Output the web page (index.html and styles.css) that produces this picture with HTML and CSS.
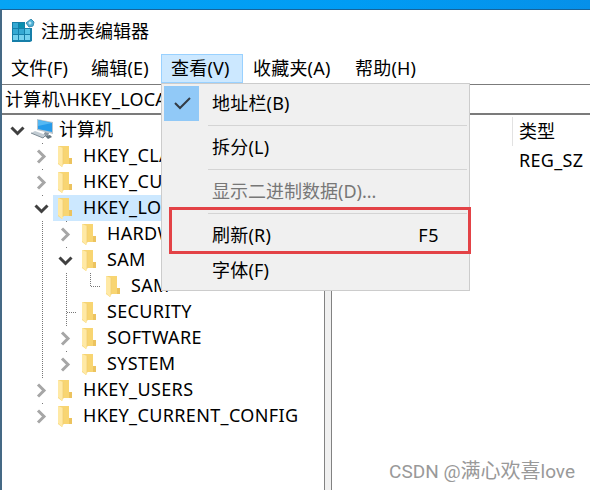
FILE: index.html
```
<!DOCTYPE html>
<html lang="zh-CN">
<head>
    <meta charset="UTF-8">
    <title>注册表编辑器</title>
    <link rel="stylesheet" href="styles.css">
</head>
<body>
    <!-- Shared icons -->
    <svg class="defs">
        <symbol id="folder" viewBox="0 0 15 22">
            <path d="M0 1h10v12h4v6H5l-1 3-4-3z" fill="#f5d475"/>
            <path d="M5 1h6v12h3v6H5z" fill="#f8d572"/>
            <path d="M11 13h3v6h-3z" fill="#ecc35f"/>
            <path d="M0 1l5 2v18l-1 1-4-4z" fill="#ffe9a5"/>
            <path d="M5 3v17" stroke="#efcd70" stroke-width=".7"/>
        </symbol>
        <symbol id="closed" viewBox="0 0 24 24">
            <path d="M9 6.500l6 6-6 6" fill="none" stroke="#a6a6a6" stroke-width="3"/>
        </symbol>
        <symbol id="open" viewBox="0 0 24 24">
            <path d="M6.500 9.500l6 6 6-6" fill="none" stroke="#404040" stroke-width="3"/>
        </symbol>
    </svg>

    <div class="desktop"></div>
    <div class="window">
        <div class="title-bar">
            <svg class="app-icon" width="24" height="24" viewBox="0 0 24 24">
                <path d="M1 3h13v6h7v13l-2 1H1z" fill="#167fa9"/>
                <path d="M2 4h5v5H2zM2 10h5v5H2zM8 10h5v5H8z" fill="#35a9d3"/>
                <path d="M8 4h5v5H8z" fill="#078fae"/>
                <path d="M14 10h5v5h-5z" fill="#55c3e5"/>
                <path d="M2 16h5v5H2zM8 16h5v5H8zM14 16h5v5h-5z" fill="#75d1ee"/>
                <path d="M20 0l3 3-1 4-4 1-3-4z" fill="#4eb0d5" stroke="#398eb2"/>
                <circle cx="19" cy="4" r="1.500" fill="#b6e5f4"/>
            </svg>
            <span>注册表编辑器</span>
        </div>
        <div class="menu-bar">
            <div class="menu file">文件(F)</div>
            <div class="menu edit">编辑(E)</div>
            <div class="menu view active">查看(V)
                <div class="dropdown">
                    <div class="item">
                        <span class="check"><svg width="35" height="35" viewBox="0 0 35 35"><path d="M11 17l5 5 10-10" fill="none" stroke="#333b45" stroke-width="2"/></svg></span>
                        <span>地址栏(B)</span>
                    </div>
                    <div class="separator"></div>
                    <div class="item"><span>拆分(L)</span></div>
                    <div class="separator"></div>
                    <div class="item disabled"><span>显示二进制数据(D)...</span></div>
                    <div class="separator"></div>
                    <div class="item"><span>刷新(R)</span><span class="shortcut">F5</span></div>
                    <div class="item"><span>字体(F)</span></div>
                    <div class="highlight"></div>
                </div>
            </div>
            <div class="menu favorites">收藏夹(A)</div>
            <div class="menu help">帮助(H)</div>
        </div>
        <div class="address">计算机\HKEY_LOCA</div>
        <div class="panes">
            <div class="tree">
                <div class="row">
                    <span class="cell"><svg><use href="#open"/></svg></span>
                    <span class="node"><svg class="computer" width="24" height="22" viewBox="0 0 24 22">
                        <path d="M6 0l16 3v12L6 11z" fill="#b6c3cc"/>
                        <path d="M7 1l14 3v9L7 10z" fill="#269bea"/>
                        <path d="M7 1l14 3-14 3z" fill="#55b8f3"/>
                        <path d="M14 13l4 1-1 3-5-1z" fill="#8996a0"/>
                        <path d="M0 14l4-2 11 4-3 3z" fill="#c2ccd3"/>
                        <path d="M0 14l12 5 3-3" fill="none" stroke="#7d8b94"/>
                        <path d="M14 17l5-1 2 2-4 2z" fill="#65757e"/>
                    </svg></span>
                    <span class="label">计算机</span>
                </div>
                <div class="row">
                    <span class="cell"></span>
                    <span class="cell line"><svg><use href="#closed"/></svg></span>
                    <span class="node"><svg class="folder"><use href="#folder"/></svg></span>
                    <span class="label">HKEY_CLASSES_ROOT</span>
                </div>
                <div class="row">
                    <span class="cell"></span>
                    <span class="cell line"><svg><use href="#closed"/></svg></span>
                    <span class="node"><svg class="folder"><use href="#folder"/></svg></span>
                    <span class="label">HKEY_CURRENT_USER</span>
                </div>
                <div class="row">
                    <span class="cell"></span>
                    <span class="cell line"><svg><use href="#open"/></svg></span>
                    <span class="node selected"><svg class="folder"><use href="#folder"/></svg></span>
                    <span class="label selected">HKEY_LOCAL_MACHINE</span>
                </div>
                <div class="row">
                    <span class="cell"></span>
                    <span class="cell line"></span>
                    <span class="cell line"><svg><use href="#closed"/></svg></span>
                    <span class="node"><svg class="folder"><use href="#folder"/></svg></span>
                    <span class="label">HARDWARE</span>
                </div>
                <div class="row">
                    <span class="cell"></span>
                    <span class="cell line"></span>
                    <span class="cell line"><svg><use href="#open"/></svg></span>
                    <span class="node"><svg class="folder"><use href="#folder"/></svg></span>
                    <span class="label">SAM</span>
                </div>
                <div class="row">
                    <span class="cell"></span>
                    <span class="cell line"></span>
                    <span class="cell line"></span>
                    <span class="cell line last branch"></span>
                    <span class="node"><svg class="folder"><use href="#folder"/></svg></span>
                    <span class="label">SAM</span>
                </div>
                <div class="row">
                    <span class="cell"></span>
                    <span class="cell line"></span>
                    <span class="cell line branch"></span>
                    <span class="node"><svg class="folder"><use href="#folder"/></svg></span>
                    <span class="label">SECURITY</span>
                </div>
                <div class="row">
                    <span class="cell"></span>
                    <span class="cell line"></span>
                    <span class="cell line"><svg><use href="#closed"/></svg></span>
                    <span class="node"><svg class="folder"><use href="#folder"/></svg></span>
                    <span class="label">SOFTWARE</span>
                </div>
                <div class="row">
                    <span class="cell"></span>
                    <span class="cell line"></span>
                    <span class="cell line last"><svg><use href="#closed"/></svg></span>
                    <span class="node"><svg class="folder"><use href="#folder"/></svg></span>
                    <span class="label">SYSTEM</span>
                </div>
                <div class="row">
                    <span class="cell"></span>
                    <span class="cell line"><svg><use href="#closed"/></svg></span>
                    <span class="node"><svg class="folder"><use href="#folder"/></svg></span>
                    <span class="label">HKEY_USERS</span>
                </div>
                <div class="row">
                    <span class="cell"></span>
                    <span class="cell line last"><svg><use href="#closed"/></svg></span>
                    <span class="node"><svg class="folder"><use href="#folder"/></svg></span>
                    <span class="label">HKEY_CURRENT_CONFIG</span>
                </div>
            </div>
            <div class="splitter"></div>
            <div class="values">
                <div class="column-header">类型</div>
                <div class="value">REG_SZ</div>
            </div>
        </div>
    </div>
    <div class="watermark">CSDN @<span class="author">满心欢喜</span>love</div>
</body>
</html>
```
FILE: styles.css
```
* {
    box-sizing: border-box;
}

body {
    margin: 0;
    width: 590px;
    height: 490px;
    overflow: hidden;
    display: flex;
    flex-direction: column;
    background: #fff;
    color: #000;
    font: 18px/26px "Noto Sans", "Noto Sans CJK SC", sans-serif;
    white-space: nowrap;
}

.defs {
    display: none;
}

.desktop {
    height: 9px;
    flex: none;
    background: linear-gradient(90deg, #06a4f4, #009cf4 60%, #0690e9);
}

.window {
    flex: 1;
    min-height: 0;
    display: flex;
    flex-direction: column;
    border-top: 1px solid #17639a;
    border-left: 2px solid #456985;
}

.title-bar {
    height: 44px;
    flex: none;
    display: flex;
    align-items: center;
    gap: 6px;
    padding: 0 0 2px 9px;
}

/* Menu bar and the open menu */
.menu-bar {
    height: 30px;
    flex: none;
    display: flex;
}

.menu {
    height: 29px;
    padding-left: 10px;
    line-height: 29px;
    letter-spacing: 0.2px;
}

.file {
    width: 80px;
    padding-left: 9px;
}

.edit {
    width: 79px;
    padding-left: 9px;
}

.view {
    position: relative;
    width: 82px;
    padding-left: 9px;
}

.favorites {
    width: 102px;
}

.menu.active {
    background: #cce8ff;
    border: 1px solid #99d1ff;
    line-height: 27px;
}

.dropdown {
    position: absolute;
    z-index: 5;
    top: 28px;
    left: -1px;
    width: 309px;
    height: 208px;
    padding: 2px;
    border: 1px solid #ccc;
    background: #f0f0f0;
}

.item {
    height: 35px;
    display: flex;
    align-items: center;
    padding: 0 28px 0 48px;
}

.check {
    width: 35px;
    height: 35px;
    margin: 0 13px 0 -48px;
    background: #91c9f7;
}

.disabled {
    color: #777;
    letter-spacing: 0;
}

.shortcut {
    margin-left: auto;
    letter-spacing: 0.5px;
}

.separator {
    height: 9px;
    margin-left: 44px;
    border-top: 4px solid #f0f0f0;
    border-bottom: 4px solid #f0f0f0;
    background: #d4d4d4;
}

.highlight {
    position: absolute;
    top: 123px;
    left: 7px;
    width: 302px;
    height: 47px;
    border: 3px solid #e34246;
}

.address {
    height: 31px;
    flex: none;
    padding-left: 3px;
    line-height: 28px;
    letter-spacing: 0.2px;
    border-top: 1px solid #7b7b7b;
    border-bottom: 2px solid #7b7b7b;
    overflow: hidden;
}

.panes {
    flex: 1;
    min-height: 0;
    display: flex;
}

/* Key tree */
.tree {
    width: 322px;
    padding: 2px 0 0 3px;
}

.row {
    display: flex;
    height: 26px;
}

.label {
    line-height: 24px;
    letter-spacing: 0.36px;
}

.row:first-child .label {
    letter-spacing: 0;
}

.cell {
    display: flex;
    align-items: center;
    width: 24px;
    height: 26px;
}

.line {
    background: repeating-linear-gradient(#777 0 1px, transparent 1px 2px) 13px 0 / 1px 100% no-repeat;
}

.last {
    background-size: 1px 13px;
}

.branch::after {
    content: "";
    width: 10px;
    height: 1px;
    margin-left: 14px;
    background: repeating-linear-gradient(90deg, #777 0 1px, transparent 1px 2px);
}

.cell svg {
    width: 24px;
    height: 24px;
    background: #fff;
}

.node {
    display: flex;
    align-items: center;
    width: 30px;
}

.computer {
    margin-left: 2px;
}

.folder {
    width: 15px;
    height: 22px;
    margin-left: 5px;
}

.selected {
    background: #cce8ff;
}

.splitter {
    width: 8px;
    background: #f0f0f0;
    border: solid #828282;
    border-width: 0 1px;
}

.values {
    flex: 1;
    padding: 2px 0 0 180px;
}

.column-header {
    height: 29px;
    padding-left: 6px;
    border-left: 1px solid #e2e2e2;
    line-height: 29px;
}

.value {
    padding-left: 7px;
    line-height: 28px;
    letter-spacing: 0.3px;
}

.watermark {
    position: absolute;
    right: 15px;
    bottom: 5px;
    color: #999;
    font: 19px/26px Roboto, "Noto Sans CJK SC", sans-serif;
}

.author {
    font-size: 20px;
}
```
